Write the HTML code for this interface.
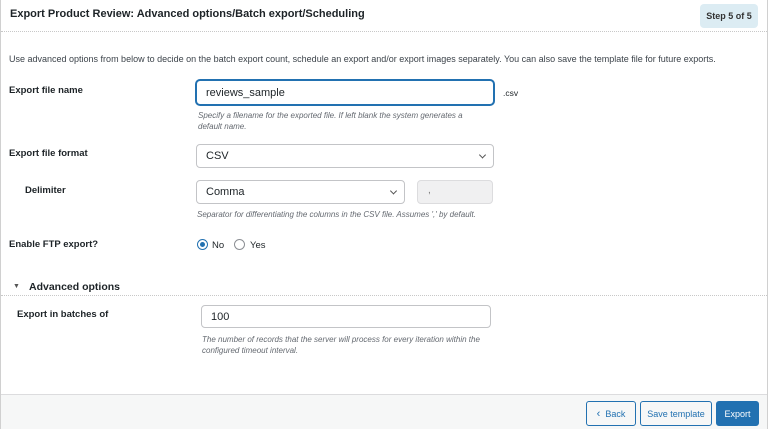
<!DOCTYPE html>
<html><head><style>
*{box-sizing:border-box;margin:0;padding:0}
body{width:768px;height:429px;background:#fff;font-family:"Liberation Sans",sans-serif;color:#1d2327;position:relative;overflow:hidden}
.frame{position:absolute;left:0;top:0;width:768px;height:429px;border:1px solid #d0d0d0;border-top:none}
.abs{position:absolute}
.h{left:10px;top:8px;font-size:11px;font-weight:bold;color:#1d2327}
.step{left:700px;top:4px;width:58px;height:24px;background:#dcecf3;border-radius:4px;font-size:9px;font-weight:bold;color:#333;text-align:center;line-height:24px}
.dot{left:1px;width:766px;border-top:1px dotted #c8c8c8}
.lbl{font-size:9.5px;font-weight:bold}
.inp{border:1px solid #8c8f94;border-radius:4px;background:#fff;font-size:11px;padding-left:9px;display:flex;align-items:center}
.desc{font-size:8px;font-style:italic;color:#646970;line-height:10.5px}
.chev{position:absolute;right:8px;top:50%;width:5px;height:5px;border-right:1px solid #555;border-bottom:1px solid #555;transform:translateY(-70%) rotate(45deg)}
.btn{top:401px;height:25px;border:1px solid #2271b1;border-radius:3px;font-size:9px;color:#2271b1;background:#f6f7f7;display:flex;align-items:center;justify-content:center}
</style></head><body>
<div class="frame"></div>
<div class="abs h">Export Product Review: Advanced options/Batch export/Scheduling</div>
<div class="abs step">Step 5 of 5</div>
<div class="abs dot" style="top:31px"></div>
<div class="abs" style="left:9px;top:54px;font-size:9px;color:#3c434a;white-space:nowrap">Use advanced options from below to decide on the batch export count, schedule an export and/or export images separately. You can also save the template file for future exports.</div>

<div class="abs lbl" style="left:9px;top:85px">Export file name</div>
<div class="abs inp" style="left:196px;top:80px;width:298px;height:25px;border-color:#2271b1;box-shadow:0 0 0 1px #2271b1">reviews_sample</div>
<div class="abs" style="left:503px;top:88px;font-size:8.5px">.csv</div>
<div class="abs desc" style="left:198px;top:111px;width:285px">Specify a filename for the exported file. If left blank the system generates a default name.</div>

<div class="abs lbl" style="left:9px;top:148px">Export file format</div>
<div class="abs inp" style="left:196px;top:144px;width:298px;height:24px;border-color:#c3c4c7">CSV<span class="chev"></span></div>
<div class="abs lbl" style="left:25px;top:185px">Delimiter</div>
<div class="abs inp" style="left:196px;top:180px;width:209px;height:24px;border-color:#c3c4c7">Comma<span class="chev"></span></div>
<div class="abs" style="left:417px;top:180px;width:76px;height:24px;background:#f0f0f1;border:1px solid #dcdcde;border-radius:4px;font-size:10px;padding:4px 0 0 10px;color:#777">,</div>
<div class="abs desc" style="left:197px;top:210px;white-space:nowrap">Separator for differentiating the columns in the CSV file. Assumes ',' by default.</div>

<div class="abs lbl" style="left:9px;top:239px">Enable FTP export?</div>
<div class="abs" style="left:197px;top:239px;width:11px;height:11px;border:1px solid #2271b1;border-radius:50%"><div style="width:5px;height:5px;background:#2271b1;border-radius:50%;margin:2px"></div></div>
<div class="abs" style="left:212px;top:240px;font-size:9.5px">No</div>
<div class="abs" style="left:234px;top:239px;width:11px;height:11px;border:1px solid #8c8f94;border-radius:50%"></div>
<div class="abs" style="left:250px;top:240px;font-size:9.5px">Yes</div>

<div class="abs" style="left:13px;top:283px;font-size:7px;color:#555">▼</div>
<div class="abs" style="left:29px;top:281px;font-size:10.5px;font-weight:bold">Advanced options</div>
<div class="abs dot" style="top:295px"></div>
<div class="abs lbl" style="left:17px;top:309px">Export in batches of</div>
<div class="abs inp" style="left:201px;top:305px;width:290px;height:23px;border-color:#c3c4c7">100</div>
<div class="abs desc" style="left:202px;top:335px;width:290px">The number of records that the server will process for every iteration within the configured timeout interval.</div>

<div class="abs" style="left:1px;top:394px;width:766px;height:35px;background:#f6f7f7;border-top:1px solid #dcdcde"></div>
<div class="abs btn" style="left:586px;width:50px"><span style="font-size:11px;margin-right:5px">‹</span>Back</div>
<div class="abs btn" style="left:640px;width:72px">Save template</div>
<div class="abs btn" style="left:716px;width:43px;background:#2271b1;color:#fff">Export</div>
</body></html>
